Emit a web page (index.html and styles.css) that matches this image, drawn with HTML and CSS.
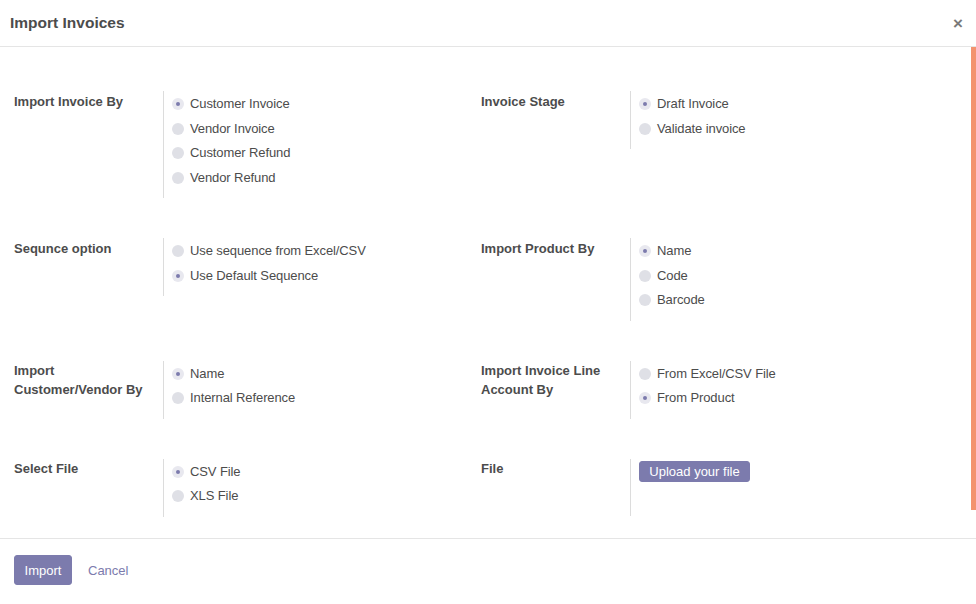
FILE: index.html
```html
<!DOCTYPE html>
<html>
<head>
<meta charset="utf-8">
<link rel="stylesheet" href="styles.css">
</head>
<body>
<div class="modal">
  <header class="modal-header">
    <h4 class="title">Import Invoices</h4>
    <span class="close">×</span>
  </header>
  <main class="modal-body">
    <div class="scroll-thumb"></div>
    <div class="row">
      <div class="group">
        <div class="label">Import Invoice By</div>
        <div class="field">
          <div class="radio checked"><span class="dot"></span>Customer Invoice</div>
          <div class="radio"><span class="dot"></span>Vendor Invoice</div>
          <div class="radio"><span class="dot"></span>Customer Refund</div>
          <div class="radio"><span class="dot"></span>Vendor Refund</div>
        </div>
      </div>
      <div class="group">
        <div class="label">Invoice Stage</div>
        <div class="field">
          <div class="radio checked"><span class="dot"></span>Draft Invoice</div>
          <div class="radio"><span class="dot"></span>Validate invoice</div>
        </div>
      </div>
    </div>
    <div class="row">
      <div class="group">
        <div class="label">Sequnce option</div>
        <div class="field">
          <div class="radio"><span class="dot"></span>Use sequence from Excel/CSV</div>
          <div class="radio checked"><span class="dot"></span>Use Default Sequence</div>
        </div>
      </div>
      <div class="group">
        <div class="label">Import Product By</div>
        <div class="field">
          <div class="radio checked"><span class="dot"></span>Name</div>
          <div class="radio"><span class="dot"></span>Code</div>
          <div class="radio"><span class="dot"></span>Barcode</div>
        </div>
      </div>
    </div>
    <div class="row">
      <div class="group">
        <div class="label">Import<br>Customer/Vendor By</div>
        <div class="field">
          <div class="radio checked"><span class="dot"></span>Name</div>
          <div class="radio"><span class="dot"></span>Internal Reference</div>
        </div>
      </div>
      <div class="group">
        <div class="label">Import Invoice Line<br>Account By</div>
        <div class="field">
          <div class="radio"><span class="dot"></span>From Excel/CSV File</div>
          <div class="radio checked"><span class="dot"></span>From Product</div>
        </div>
      </div>
    </div>
    <div class="row">
      <div class="group">
        <div class="label">Select File</div>
        <div class="field">
          <div class="radio checked"><span class="dot"></span>CSV File</div>
          <div class="radio"><span class="dot"></span>XLS File</div>
        </div>
      </div>
      <div class="group">
        <div class="label">File</div>
        <div class="field field-file">
          <button class="upload">Upload your file</button>
        </div>
      </div>
    </div>
  </main>
  <footer class="modal-footer">
    <button class="btn-primary">Import</button>
    <a class="btn-link">Cancel</a>
  </footer>
</div>
</body>
</html>
```

FILE: styles.css
```css
* { box-sizing: border-box; }
html, body { margin: 0; padding: 0; background: #fff; }
body {
  font-family: "Liberation Sans", Arial, sans-serif;
  font-size: 13px;
  color: #4c4c4c;
}
.modal {
  width: 976px;
  height: 604px;
  display: flex;
  flex-direction: column;
}
.modal-header {
  height: 47px;
  border-bottom: 1px solid #e5e5e5;
  display: flex;
  align-items: center;
  justify-content: space-between;
  padding: 0 13px 0 10px;
}
.title {
  margin: 0;
  font-size: 15.5px;
  font-weight: bold;
  color: #4c4c4c;
  line-height: 20px;
}
.close {
  font-size: 17px;
  font-weight: bold;
  color: #7a7a7a;
  line-height: 1;
  margin-top: 1px;
}
.modal-body {
  position: relative;
  flex: 1;
  padding: 44px 0 0 14px;
  display: flex;
  flex-direction: column;
  gap: 40px;
}
.scroll-thumb {
  position: absolute;
  right: 0;
  top: 0;
  width: 5px;
  height: 463px;
  background: #f3936f;
}
.row {
  display: grid;
  grid-template-columns: 467px 467px;
}
.group {
  display: flex;
  align-items: flex-start;
}
.label {
  width: 149px;
  font-weight: bold;
  line-height: 19px;
  padding-top: 0.5px;
}
.field {
  border-left: 1px solid #dcdcdc;
  padding: 1px 0 8px 8px;
}
.radio {
  display: flex;
  align-items: center;
  line-height: 24.5px;
  height: 24.5px;
  letter-spacing: -0.1px;
}
.dot {
  width: 12px;
  height: 12px;
  border-radius: 50%;
  background: #dfe0e6;
  margin-right: 6px;
  flex: none;
  display: flex;
  align-items: center;
  justify-content: center;
}
.radio.checked .dot { background: #e8e8ef; }
.radio.checked .dot::after {
  content: "";
  width: 4px;
  height: 4px;
  border-radius: 50%;
  background: #7c7bad;
}
.field-file {
  padding-top: 2px;
  padding-bottom: 34px;
}
.upload {
  font-family: inherit;
  font-size: 13px;
  color: #fff;
  background: #7c7bad;
  border: 1px solid #7c7bad;
  border-radius: 3px;
  height: 21px;
  width: 111px;
  padding: 0;
  line-height: 19px;
}
.modal-footer {
  height: 66px;
  border-top: 1px solid #e5e5e5;
  display: flex;
  align-items: flex-start;
  padding: 16px 14px 0 14px;
  gap: 16px;
}
.btn-primary {
  font-family: inherit;
  font-size: 13px;
  color: #fff;
  background: #7c7bad;
  border: 1px solid #7c7bad;
  border-radius: 3px;
  height: 30px;
  width: 58px;
  padding: 0;
}
.btn-link {
  color: #7c7bad;
  line-height: 30px;
  padding-top: 1px;
}
```
